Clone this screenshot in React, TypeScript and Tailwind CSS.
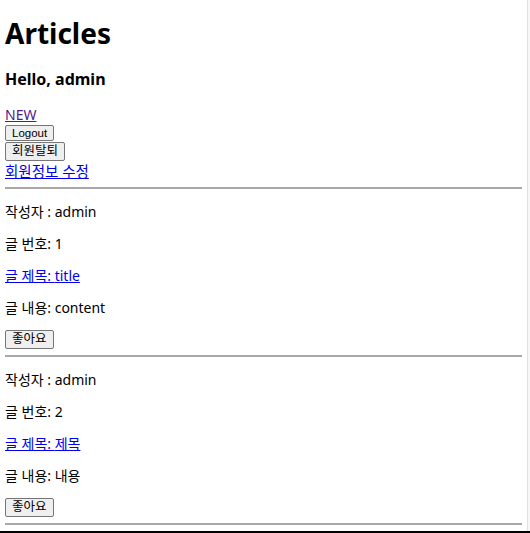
const korean = "font-['Malgun_Gothic','Noto_Sans','Noto_Sans_CJK_KR',sans-serif]";

function Btn({ children, tall }: { children: React.ReactNode; tall?: boolean }) {
  return (
    <button
      className={`block w-fit rounded-[2px] border border-[#767676] bg-[#efefef] px-[6px] text-black font-['Liberation_Sans','Noto_Sans_CJK_KR',sans-serif] ${
        tall ? "h-[19px] text-[12.5px] leading-[17px]" : "h-[16px] text-[11.5px] leading-[14px]"
      }`}
    >
      {children}
    </button>
  );
}

const articles = [
  { id: 1, writer: "admin", title: "title", content: "content" },
  { id: 2, writer: "admin", title: "제목", content: "내용" },
];

export default function App() {
  return (
    <div className={`flex h-[533px] w-[530px] border-b-2 border-black bg-white text-black ${korean}`}>
      <div className="flex-1 px-[5px]">
        <h1 className="mt-[17px] text-[28px] font-bold leading-[32px]">Articles</h1>
        <h3 className="mt-[20px] text-[16px] font-bold leading-[20px]">Hello, admin</h3>
        <a href="#" className="mt-[17px] block w-fit text-[14px] leading-[18px] text-[#551a8b] underline">
          NEW
        </a>
        <div className="mt-[1px] flex flex-col items-start gap-[1px]">
          <Btn>Logout</Btn>
          <Btn tall>회원탈퇴</Btn>
        </div>
        <a href="#" className="block w-fit text-[14.5px] leading-[20px] text-[#0000ee] underline">
          회원정보 수정
        </a>
        <hr className="mt-[6px] border-t-2 border-[#a8a8a8]" />
        {articles.map((a) => (
          <div key={a.id} className="text-[14px] leading-[20px]">
            <p className="mt-[13px]">작성자 : {a.writer}</p>
            <p className="mt-[12px]">글 번호: {a.id}</p>
            <a href="#" className="mt-[12px] block w-fit text-[#0000ee] underline">
              글 제목: {a.title}
            </a>
            <p className="mt-[12px]">글 내용: {a.content}</p>
            <div className="mt-[12px]">
              <Btn tall>좋아요</Btn>
            </div>
            <hr className="mt-[6px] border-t-2 border-[#a8a8a8]" />
          </div>
        ))}
      </div>
      <div className="w-[1px] bg-[#e0e0e0]" />
      <div className="w-[2px] bg-[#f7f7f7]" />
    </div>
  );
}
